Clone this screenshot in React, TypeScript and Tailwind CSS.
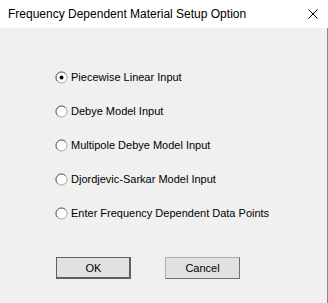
import React, { useState } from 'react';

const options = [
  'Piecewise Linear Input',
  'Debye Model Input',
  'Multipole Debye Model Input',
  'Djordjevic-Sarkar Model Input',
  'Enter Frequency Dependent Data Points',
];

function Radio({ checked }: { checked: boolean }) {
  return (
    <svg width="13" height="13" viewBox="0 0 13 13" className="shrink-0">
      <circle cx="6.5" cy="6.5" r="5.5" fill="#ffffff" stroke="#a0a0a0" strokeWidth="1" />
      <path d="M2.6 10.4 A5.5 5.5 0 0 1 10.4 2.6" fill="none" stroke="#696969" strokeWidth="1" />
      {checked && <circle cx="6.5" cy="6.5" r="2" fill="#000000" />}
    </svg>
  );
}

export default function App() {
  const [selected, setSelected] = useState(0);

  return (
    <div
      className="w-[328px] h-[303px] flex flex-col bg-[#f0f0f0] overflow-hidden"
      style={{ fontFamily: '"Liberation Sans", Arial, sans-serif' }}
    >
      {/* Title bar */}
      <div className="h-[28px] bg-white flex items-center justify-between pl-[8px] pr-[10px] shrink-0">
        <span className="text-[12px] text-black">
          Frequency Dependent Material Setup Option
        </span>
        <svg width="10" height="10" viewBox="0 0 10 10">
          <path d="M0.5 0.5 L9.5 9.5 M9.5 0.5 L0.5 9.5" stroke="#000" strokeWidth="1" />
        </svg>
      </div>

      {/* Body */}
      <div className="flex-1 flex flex-col border-r border-[#8a8a8a] pl-[55px] pt-[43px]">
        <div className="flex flex-col gap-[21px]">
          {options.map((label, i) => (
            <label
              key={label}
              className="flex items-center gap-[3px] h-[13px] text-[11px] text-black cursor-default"
              onClick={() => setSelected(i)}
            >
              <Radio checked={selected === i} />
              <span className="leading-[13px]">{label}</span>
            </label>
          ))}
        </div>

        <div className="flex gap-[34px] mt-[37px] pl-[1px]">
          <button className="w-[75px] h-[22px] bg-[#e1e1e1] border border-[#5f5f5f] shadow-[inset_-1px_-1px_0_#5f5f5f] text-[11px] text-black">
            OK
          </button>
          <button className="w-[75px] h-[22px] bg-[#e1e1e1] border border-[#adadad] border-b-[#6f6f6f] border-r-[#6f6f6f] text-[11px] text-black">
            Cancel
          </button>
        </div>
      </div>
    </div>
  );
}
